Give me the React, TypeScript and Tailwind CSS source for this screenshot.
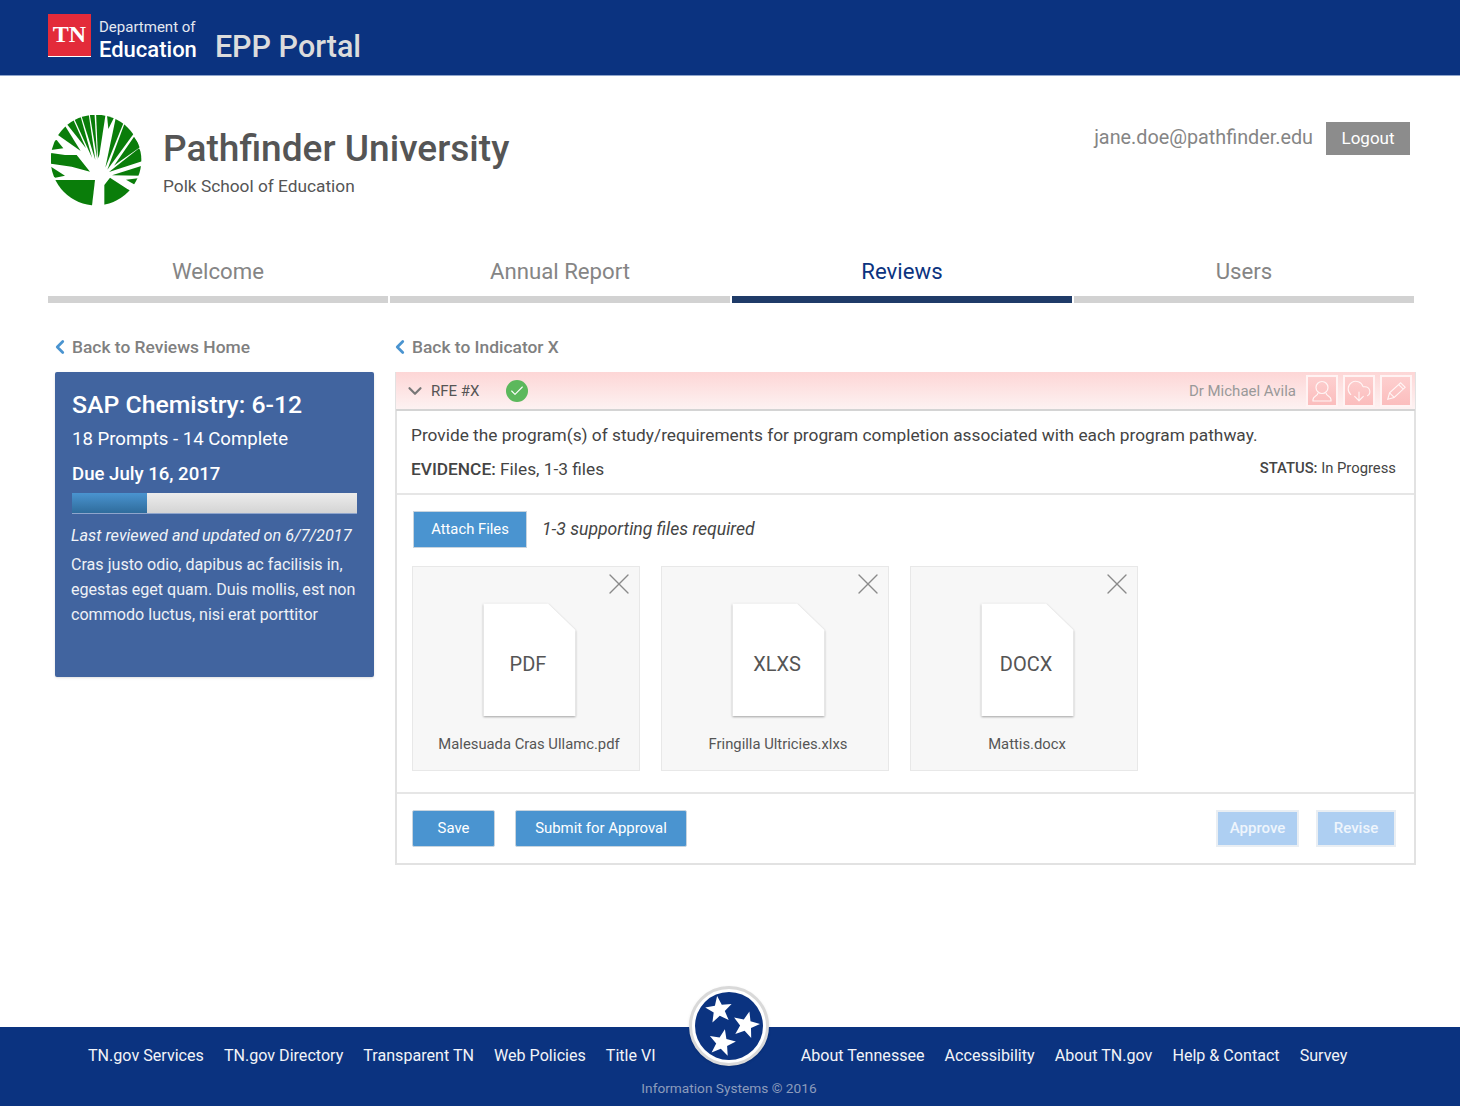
import { Check, ChevronDown, ChevronLeft, CloudDownload, X } from 'lucide-react';

const leftLinks = ['TN.gov Services', 'TN.gov Directory', 'Transparent TN', 'Web Policies', 'Title VI'];
const rightLinks = ['About Tennessee', 'Accessibility', 'About TN.gov', 'Help & Contact', 'Survey'];
const tabs = ['Welcome', 'Annual Report', 'Reviews', 'Users'];
const files = [
  { type: 'PDF', name: 'Malesuada Cras Ullamc.pdf' },
  { type: 'XLXS', name: 'Fringilla Ultricies.xlxs' },
  { type: 'DOCX', name: 'Mattis.docx' },
];

// green blades of the tree, clipped to the disc
const blades = [
  '168,20 198,20 178,150 174,160',
  '200,20 226,30 205,72',
  '228,35 252,50 196,188',
  '254,55 282,85 202,194',
  '282,95 302,125 238,170 222,182',
  '297,130 318,165 207,201',
  '318,178 318,212 216,211',
  '306,218 290,242 258,224',
  '193,310 193,240 210,218 262,252 300,272 240,320',
  '40,225 165,225 155,310 60,300',
  '25,180 75,212 46,218 20,200',
  '25,143 75,150 110,150 150,200 95,185 25,175',
  '30,110 50,105 70,130 25,136',
  '40,80 75,62 122,138',
  '75,50 98,40 138,130',
  '100,35 120,28 156,158',
  '122,25 145,20 166,165',
  '148,20 163,20 172,165',
];

function TreeLogo() {
  return (
    <svg viewBox="33 30 276 276" className="w-[92px] h-[92px] shrink-0">
      <defs>
        <clipPath id="tree-disc">
          <circle cx="168" cy="165" r="136" />
        </clipPath>
      </defs>
      <g clipPath="url(#tree-disc)" fill="#0a7d0a">
        {blades.map((p) => (
          <polygon key={p} points={p} />
        ))}
      </g>
    </svg>
  );
}

function starPoints(cx: number, cy: number, r: number, rotate: number) {
  const pts: string[] = [];
  for (let i = 0; i < 10; i++) {
    const rad = i % 2 === 0 ? r : r * 0.42;
    const a = ((rotate + i * 36 - 90) * Math.PI) / 180;
    pts.push(`${(cx + rad * Math.cos(a)).toFixed(1)},${(cy + rad * Math.sin(a)).toFixed(1)}`);
  }
  return pts.join(' ');
}

function Seal() {
  return (
    <div className="absolute left-[689px] top-[-41px] w-[80px] h-[80px] rounded-full bg-white border-[3px] border-[#d9d9d9] flex items-center justify-center shadow-sm">
      <svg viewBox="0 0 68 68" className="w-[68px] h-[68px]">
        <circle cx="34" cy="34" r="34" fill="#0b3380" />
        <polygon points={starPoints(24, 18, 14, -8)} fill="#fff" />
        <polygon points={starPoints(51, 33, 14, 14)} fill="#fff" />
        <polygon points={starPoints(27, 51, 14, 12)} fill="#fff" />
      </svg>
    </div>
  );
}

function IconBox({ children }: { children: React.ReactNode }) {
  return (
    <div className="w-[32px] h-[32px] border-2 border-[#fff3f3] bg-gradient-to-b from-[#fdcfcf] to-[#fbbdbd] flex items-center justify-center text-[#fff5f5]">
      {children}
    </div>
  );
}

function FileCard({ type, name }: { type: string; name: string }) {
  return (
    <div className="relative w-[228px] h-[205px] bg-[#f7f7f7] border border-[#e8e8e8] flex flex-col items-center pt-[36px] pl-[6px]">
      <X className="absolute right-[2px] top-[-1px] w-[36px] h-[36px] text-[#8a8a8a]" strokeWidth={0.9} />
      <div className="grid place-items-center w-[93px] h-[114px]">
        <svg viewBox="0 0 93 114" className="col-start-1 row-start-1 w-[93px] h-[114px] drop-shadow-[0_1px_1px_rgba(0,0,0,0.35)]">
          <polygon points="0.5,0.5 65,0.5 92.5,27 92.5,113 0.5,113" fill="#fff" />
        </svg>
        <span className="relative col-start-1 row-start-1 text-[20px] text-[#555] mt-[8px] pr-[2px]">{type}</span>
      </div>
      <div className="mt-[17px] text-[14.8px] text-[#555] leading-[20px]">{name}</div>
    </div>
  );
}

export default function App() {
  return (
    <div className="w-[1460px] h-[1106px] flex flex-col bg-white font-['Roboto',sans-serif] overflow-hidden">
      {/* Top bar */}
      <header className="h-[76px] shrink-0 bg-[#0b3380] border-b border-[#8fa5cc] flex items-start pl-[48px] pt-[14px]">
        <div className="w-[43px] h-[43px] bg-[#e32b3a] border-b border-white flex items-center justify-center text-white text-[24px] font-bold font-['Liberation_Serif',serif] pb-[3px]">
          TN
        </div>
        <div className="ml-[8px] text-white">
          <div className="text-[15px] leading-[18px] mt-[4px] text-[#e4e8f0]">Department of</div>
          <div className="text-[22px] leading-[26px] mt-[1px] font-medium">Education</div>
        </div>
        <div className="ml-[18px] mt-[14px] text-[30.5px] leading-[38px] text-[#dcdcdc] font-medium">EPP Portal</div>
      </header>

      {/* University heading */}
      <div className="h-[170px] shrink-0 flex items-start pl-[51px] pr-[50px] pt-[39px]">
        <TreeLogo />
        <div className="ml-[20px]">
          <div className="text-[37.1px] leading-[44px] mt-[12px] font-medium text-[#555]">Pathfinder University</div>
          <div className="text-[17.3px] leading-[24px] mt-[3px] text-[#555]">Polk School of Education</div>
        </div>
        <div className="ml-auto flex items-center mt-[7px]">
          <span className="text-[19.8px] text-[#858585] pb-[1px]">jane.doe@pathfinder.edu</span>
          <button className="ml-[13px] w-[84px] h-[33px] bg-[#8c8c8c] text-white text-[17px]">Logout</button>
        </div>
      </div>

      {/* Tabs */}
      <nav className="ml-[48px] w-[1366px] grid grid-cols-4 gap-x-[2px] shrink-0">
        {tabs.map((tab) => (
          <div
            key={tab}
            className={
              tab === 'Reviews'
                ? 'h-[57px] flex items-center justify-center pt-[2px] border-b-[7px] border-[#1f3b68] text-[22.2px] text-[#0b3380]'
                : 'h-[57px] flex items-center justify-center pt-[2px] border-b-[7px] border-[#d2d2d2] text-[22.2px] text-[#858585]'
            }
          >
            {tab}
          </div>
        ))}
      </nav>

      {/* Main content */}
      <main className="flex-1 flex items-start pl-[55px] pt-[32px] gap-x-[21px]">
        <aside className="w-[319px] shrink-0">
          <div className="h-[24px] flex items-center text-[17.4px] text-[#808080] font-medium">
            <ChevronLeft className="w-[22px] h-[22px] text-[#4a94d0] -ml-[6px] mr-[1px]" strokeWidth={3} />
            Back to Reviews Home
          </div>
          <div className="mt-[13px] h-[305px] bg-[#41649f] rounded-[2px] px-[17px] pt-[17px] text-white shadow-sm">
            <div className="text-[24.8px] leading-[32px] font-medium">SAP Chemistry: 6-12</div>
            <div className="text-[18.6px] leading-[24px] mt-[6px]">18 Prompts - 14 Complete</div>
            <div className="text-[18.6px] leading-[24px] mt-[11px] font-medium">Due July 16, 2017</div>
            <div className="mt-[7px] h-[21px] bg-gradient-to-b from-[#ececec] to-[#d4d4d4] border-b border-[#8fa5cc]">
              <div className="w-[75px] h-full bg-gradient-to-b from-[#4a94d0] to-[#2f6c9c]" />
            </div>
            <div className="text-[16.3px] leading-[20px] italic mt-[12px] -mx-[1px] whitespace-nowrap text-[#f2f4f8]">
              Last reviewed and updated on 6/7/2017
            </div>
            <div className="text-[16.1px] leading-[25px] mt-[6px] -mx-[1px] text-[#eef1f6]">
              Cras justo odio, dapibus ac facilisis in, egestas eget quam. Duis mollis, est non commodo luctus, nisi
              erat porttitor
            </div>
          </div>
        </aside>

        <section className="w-[1021px] shrink-0">
          <div className="h-[24px] flex items-center text-[17.4px] text-[#808080] font-medium">
            <ChevronLeft className="w-[22px] h-[22px] text-[#4a94d0] -ml-[6px] mr-[1px]" strokeWidth={3} />
            Back to Indicator X
          </div>
          <div className="mt-[13px] h-[493px] border-x-2 border-b-2 border-[#e2e2e2] flex flex-col">
            {/* Panel header */}
            <div className="h-[39px] -mx-[1px] shrink-0 bg-gradient-to-b from-[#fdd6d6] to-[#fdf2f2] border-b-2 border-[#d4d4d4] flex items-center pl-[8px] pr-[3px]">
              <ChevronDown className="w-[22px] h-[22px] text-[#777]" strokeWidth={2.4} />
              <span className="ml-[5px] pt-[1px] text-[15px] text-[#555]">RFE #X</span>
              <span className="ml-[27px] w-[22px] h-[22px] rounded-full bg-[#5cb85c] flex items-center justify-center">
                <Check className="w-[16px] h-[16px] text-white" strokeWidth={1.6} />
              </span>
              <span className="ml-auto mr-[10px] pt-[1px] text-[15px] text-[#999]">Dr Michael Avila</span>
              <div className="flex gap-x-[5px]">
                <IconBox>
                  <svg viewBox="0 0 24 24" className="w-[24px] h-[24px]" fill="none" stroke="currentColor" strokeWidth="1.2">
                    <circle cx="12" cy="8.5" r="6" />
                    <path d="M8 14 C8 17 3 17 3 20.5 L3 22 L21 22 L21 20.5 C21 17 16 17 16 14" />
                  </svg>
                </IconBox>
                <IconBox>
                  <CloudDownload className="w-[26px] h-[26px]" strokeWidth={1} />
                </IconBox>
                <IconBox>
                  <svg viewBox="0 0 24 24" className="w-[22px] h-[22px]" fill="none" stroke="currentColor" strokeWidth="1.2">
                    <path d="M3 21 L5 14 L17 3 L22 8 L10 19 Z M15 5 L20 10 M5 14 L10 19" />
                  </svg>
                </IconBox>
              </div>
            </div>

            {/* Prompt */}
            <div className="h-[84px] shrink-0 border-b-2 border-[#e6e6e6] pl-[14px] pr-[18px] pt-[13px] text-[#444]">
              <div className="text-[17.3px] leading-[22px] whitespace-nowrap">
                Provide the program(s) of study/requirements for program completion associated with each program pathway.
              </div>
              <div className="flex items-center justify-between mt-[12px] leading-[22px]">
                <span className="text-[17.3px]">
                  <span className="font-medium">EVIDENCE:</span> Files, 1-3 files
                </span>
                <span className="text-[14.8px] -mt-[2px]">
                  <span className="font-medium">STATUS:</span> In Progress
                </span>
              </div>
            </div>

            {/* Attachments */}
            <div className="flex-1 border-b-2 border-[#e6e6e6] pl-[15px] pt-[15px]">
              <div className="flex items-center h-[38px]">
                <button className="ml-px w-[114px] h-[37px] bg-[#4a94d0] border border-[#c8d4de] text-white text-[14.8px]">
                  Attach Files
                </button>
                <span className="ml-[15px] text-[17.6px] italic text-[#444]">1-3 supporting files required</span>
              </div>
              <div className="flex gap-x-[21px] mt-[18px]">
                {files.map((f) => (
                  <FileCard key={f.name} type={f.type} name={f.name} />
                ))}
              </div>
            </div>

            {/* Actions */}
            <div className="h-[69px] shrink-0 flex items-center pl-[15px] pr-[18px]">
              <button className="w-[83px] h-[37px] rounded-[2px] bg-[#4a94d0] border border-[#c8d4de] text-white text-[14.9px]">
                Save
              </button>
              <button className="ml-[20px] w-[172px] h-[37px] rounded-[2px] bg-[#4a94d0] border border-[#c8d4de] text-white text-[14.9px]">
                Submit for Approval
              </button>
              <button className="ml-auto w-[83px] h-[37px] bg-[#aecff2] border-2 border-[#e9eef3] text-[#eef5fc] text-[15px] font-medium">
                Approve
              </button>
              <button className="ml-[17px] w-[80px] h-[37px] bg-[#aecff2] border-2 border-[#e9eef3] text-[#eef5fc] text-[15px] font-medium">
                Revise
              </button>
            </div>
          </div>
        </section>
      </main>

      {/* Footer */}
      <footer className="relative h-[79px] shrink-0 bg-[#0b3380]">
        <Seal />
        <div className="flex items-center h-[57px] pl-[88px] text-[16.1px] text-[#f2f4f8] pt-[1px]">
          <div className="flex gap-x-[20px]">
            {leftLinks.map((l) => (
              <span key={l}>{l}</span>
            ))}
          </div>
          <div className="flex gap-x-[20px] ml-[145px]">
            {rightLinks.map((l) => (
              <span key={l}>{l}</span>
            ))}
          </div>
        </div>
        <div className="text-center text-[13.7px] leading-[18px] -mt-[5px] text-[#8c9cbc] pr-[2px]">
          Information Systems © 2016
        </div>
      </footer>
    </div>
  );
}
